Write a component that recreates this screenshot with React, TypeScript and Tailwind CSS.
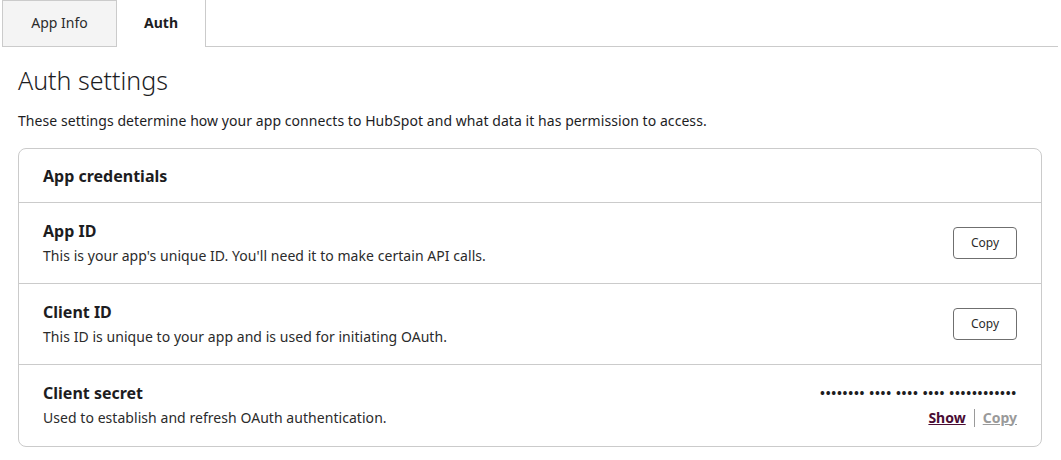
import React from "react";

const font = { fontFamily: '"Noto Sans", "Liberation Sans", sans-serif' };

function Row({
  title,
  desc,
  right,
  last,
}: {
  title: string;
  desc: string;
  right: React.ReactNode;
  last?: boolean;
}) {
  return (
    <div
      className={`flex h-[81px] items-center justify-between pl-[24px] pr-[24px] ${
        last ? "" : "border-b border-[#cbcbcb]"
      }`}
    >
      <div className="flex flex-col pb-[1px]">
        <div className="text-[16px] font-bold leading-[20px] text-[#1d1d1f]">{title}</div>
        <div className="mt-[6px] text-[14px] leading-[18px] tracking-[0.05px] text-[#2b2b2b]">{desc}</div>
      </div>
      {right}
    </div>
  );
}

function CopyBtn() {
  return (
    <button className="h-[32px] w-[64px] rounded-[4px] border border-[#6f6f6f] bg-white text-[12px] text-[#2b2b2b]">
      Copy
    </button>
  );
}

export default function App() {
  return (
    <div className="h-[460px] w-[1061px] bg-white" style={font}>
      <div className="flex h-[47px] pl-[2px] pr-[3px]">
        <div className="flex w-[115px] items-center justify-center border border-[#cbcbcb] bg-[#f4f4f4] pb-[2px] text-[14px] text-[#2b2b2b]">
          App Info
        </div>
        <div className="flex w-[89px] items-center justify-center border-r border-[#cbcbcb] pb-[2px] text-[14px] font-bold text-[#1d1d1f]">
          Auth
        </div>
        <div className="flex-1 border-b border-[#cbcbcb]" />
      </div>
      <div className="px-[18px]">
        <h1 className="mt-[17px] text-[25px] font-light leading-[32px] text-[#1d1d1f]">Auth settings</h1>
        <p className="mt-[16px] text-[14px] leading-[18px] tracking-[0.06px] text-[#1d1d1f]">
          These settings determine how your app connects to HubSpot and what data it has permission to access.
        </p>
        <div className="mt-[18px] w-[1024px] rounded-[8px] border border-[#cbcbcb]">
          <div className="flex h-[54px] items-center border-b border-[#cbcbcb] pl-[24px] text-[16px] font-bold text-[#1d1d1f]">
            App credentials
          </div>
          <Row
            title="App ID"
            desc="This is your app's unique ID. You'll need it to make certain API calls."
            right={<CopyBtn />}
          />
          <Row
            title="Client ID"
            desc="This ID is unique to your app and is used for initiating OAuth."
            right={<CopyBtn />}
          />
          <Row
            title="Client secret"
            desc="Used to establish and refresh OAuth authentication."
            last
            right={
              <div className="flex flex-col items-end">
                <div className="text-[13px] font-bold leading-[16px] tracking-[0.75px] text-[#1d1d1f]">
                  •••••••• •••• •••• •••• ••••••••••••
                </div>
                <div className="mt-[8px] flex items-center text-[14px] font-bold leading-[18px]">
                  <span className="text-[#4a0d34] underline">Show</span>
                  <span className="mx-[8px] h-[18px] w-px bg-[#9a9a9a]" />
                  <span className="text-[#9a9a9a] underline">Copy</span>
                </div>
              </div>
            }
          />
        </div>
      </div>
    </div>
  );
}
